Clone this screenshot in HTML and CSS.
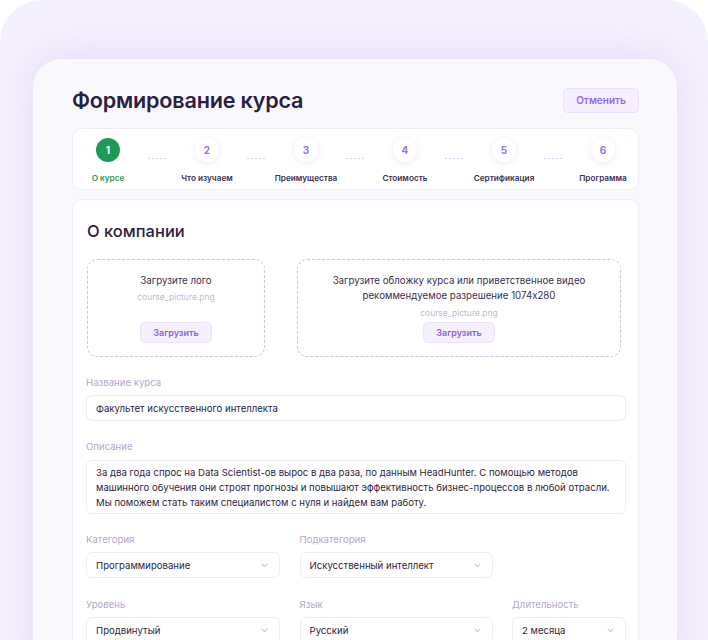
FILE: index.html
```html
<!DOCTYPE html>
<html lang="ru">
<head>
<meta charset="utf-8">
<title>Формирование курса</title>
<link rel="stylesheet" href="styles.css">
</head>
<body>
<div class="frame">
  <div class="panel">
    <div class="header">
      <h1 class="title">Формирование курса</h1>
      <button class="btn-cancel">Отменить</button>
    </div>

    <div class="stepper">
      <div class="step step-active"><span class="circle">1</span><span class="step-label">О курсе</span></div>
      <div class="connector"><span class="dash"></span></div>
      <div class="step"><span class="circle">2</span><span class="step-label">Что изучаем</span></div>
      <div class="connector"><span class="dash"></span></div>
      <div class="step"><span class="circle">3</span><span class="step-label">Преимущества</span></div>
      <div class="connector"><span class="dash"></span></div>
      <div class="step"><span class="circle">4</span><span class="step-label">Стоимость</span></div>
      <div class="connector"><span class="dash"></span></div>
      <div class="step"><span class="circle">5</span><span class="step-label">Сертификация</span></div>
      <div class="connector"><span class="dash"></span></div>
      <div class="step"><span class="circle">6</span><span class="step-label">Программа</span></div>
    </div>

    <div class="card">
      <h2 class="card-title">О компании</h2>

      <div class="uploads">
        <div class="upload upload-logo">
          <div class="upload-text">Загрузите лого</div>
          <div class="upload-file">course_picture.png</div>
          <button class="btn-upload">Загрузить</button>
        </div>
        <div class="upload upload-cover">
          <div class="upload-text">Загрузите обложку курса или приветственное видео<br>рекоммендуемое разрешение 1074x280</div>
          <div class="upload-file">course_picture.png</div>
          <button class="btn-upload">Загрузить</button>
        </div>
      </div>

      <div class="field">
        <div class="label">Название курса</div>
        <div class="input">Факультет искусственного интеллекта</div>
      </div>

      <div class="field">
        <div class="label label-area">Описание</div>
        <div class="input textarea">За два года спрос на Data Scientist-ов вырос в два раза, по данным HeadHunter. С помощью методов<br>машинного обучения они строят прогнозы и повышают эффективность бизнес-процессов в любой отрасли.<br>Мы поможем стать таким специалистом с нуля и найдем вам работу.</div>
      </div>

      <div class="grid">
        <div class="field">
          <div class="label">Категория</div>
          <div class="input select"><span>Программирование</span><svg class="chev" width="7" height="5" viewBox="0 0 7 5"><path d="M1 1.2 3.5 3.6 6 1.2" fill="none" stroke="#c9bfe0" stroke-width="1.1" stroke-linecap="round" stroke-linejoin="round"/></svg></div>
        </div>
        <div class="field">
          <div class="label">Подкатегория</div>
          <div class="input select"><span>Искусственный интеллект</span><svg class="chev" width="7" height="5" viewBox="0 0 7 5"><path d="M1 1.2 3.5 3.6 6 1.2" fill="none" stroke="#c9bfe0" stroke-width="1.1" stroke-linecap="round" stroke-linejoin="round"/></svg></div>
        </div>
        <div></div>

        <div class="field">
          <div class="label">Уровень</div>
          <div class="input select"><span>Продвинутый</span><svg class="chev" width="7" height="5" viewBox="0 0 7 5"><path d="M1 1.2 3.5 3.6 6 1.2" fill="none" stroke="#c9bfe0" stroke-width="1.1" stroke-linecap="round" stroke-linejoin="round"/></svg></div>
        </div>
        <div class="field">
          <div class="label">Язык</div>
          <div class="input select"><span>Русский</span><svg class="chev" width="7" height="5" viewBox="0 0 7 5"><path d="M1 1.2 3.5 3.6 6 1.2" fill="none" stroke="#c9bfe0" stroke-width="1.1" stroke-linecap="round" stroke-linejoin="round"/></svg></div>
        </div>
        <div class="field">
          <div class="label">Длительность</div>
          <div class="input select"><span>2 месяца</span><svg class="chev" width="7" height="5" viewBox="0 0 7 5"><path d="M1 1.2 3.5 3.6 6 1.2" fill="none" stroke="#c9bfe0" stroke-width="1.1" stroke-linecap="round" stroke-linejoin="round"/></svg></div>
        </div>
      </div>
    </div>
  </div>
</div>
</body>
</html>
```
FILE: styles.css
```css
* { box-sizing: border-box; }

html, body {
  margin: 0;
  padding: 0;
  background: #ffffff;
}

body {
  font-family: Inter, "Noto Sans", "DejaVu Sans", sans-serif;
  color: #2d2340;
}

.frame {
  width: 708px;
  height: 640px;
  overflow: hidden;
  background: #f5f0fd;
  border-radius: 42px 42px 0 0;
  padding: 59px 31px 0 33px;
}

.panel {
  background: #f9f8fc;
  border-radius: 28px 28px 0 0;
  padding: 29px 38px 0 39px;
  height: 620px;
  box-shadow: 0 -4px 40px rgba(190, 165, 235, 0.28);
}

.header {
  display: flex;
  justify-content: space-between;
  align-items: center;
  height: 24px;
  margin-bottom: 16px;
}

.title {
  margin: 0;
  font-size: 21.6px;
  line-height: 24px;
  font-weight: 600;
  color: #2b2040;
  letter-spacing: -0.2px;
}

.btn-cancel {
  width: 76px;
  height: 25px;
  border: 1px solid #ebdffc;
  background: #f6effe;
  border-radius: 5px;
  font-family: inherit;
  font-size: 10px;
  font-weight: 600;
  color: #9466ee;
  padding: 0;
}

.stepper {
  display: flex;
  align-items: flex-start;
  height: 62px;
  background: #ffffff;
  border: 1px solid #efebf8;
  border-radius: 10px;
  padding: 9px 11px 0 11px;
  margin-bottom: 9px;
}

.step {
  width: 48px;
  flex: none;
  display: flex;
  flex-direction: column;
  align-items: center;
}

.circle {
  width: 24px;
  height: 24px;
  border-radius: 50%;
  background: #ffffff;
  box-shadow: 0 1px 6px rgba(130, 100, 200, 0.16);
  display: flex;
  align-items: center;
  justify-content: center;
  font-size: 10px;
  font-weight: 700;
  color: #9c6ef2;
}

.step-active .circle {
  background: #1f9a56;
  color: #ffffff;
  box-shadow: none;
}

.step-label {
  margin-top: 10px;
  white-space: nowrap;
  font-size: 8.2px;
  line-height: 12px;
  font-weight: 600;
  color: #3a2f4f;
}

.step-active .step-label {
  color: #2a9a5a;
}

.connector {
  flex: 1;
  display: flex;
  justify-content: center;
  padding-top: 20px;
}

.dash {
  width: 20px;
  height: 1px;
  background: repeating-linear-gradient(90deg, #d6cdea 0 2px, transparent 2px 4px);
}

.card {
  background: #ffffff;
  border: 1px solid #efebf8;
  border-radius: 10px;
  padding: 20px 12px 0 13px;
  height: 460px;
}

.card-title {
  margin: 0 0 17px 1px;
  font-size: 16.5px;
  line-height: 22px;
  font-weight: 500;
  color: #2b2040;
}

.uploads {
  display: flex;
  gap: 32px;
  margin-left: 1px;
  margin-bottom: 19px;
}

.upload {
  height: 98px;
  border: 1px dashed #cdbfee;
  border-radius: 10px;
  display: flex;
  flex-direction: column;
  align-items: center;
  text-align: center;
  padding: 13px 10px 13px;
}

.upload-logo { width: 178px; }
.upload-cover { width: 324px; }

.upload-text {
  font-size: 9.7px;
  line-height: 15px;
  color: #3a3050;
}

.upload-file {
  margin-top: 2px;
  font-size: 8.5px;
  line-height: 14px;
  color: #c4b8db;
}

.upload-cover .upload-file { margin-top: 3px; }

.btn-upload {
  margin-top: auto;
  width: 72px;
  height: 21px;
  border: 1px solid #ece3fb;
  background: #f6f0fe;
  border-radius: 5px;
  font-family: inherit;
  font-size: 9px;
  font-weight: 600;
  color: #8d5fe6;
  padding: 0;
}

.field {
  margin-bottom: 19px;
}

.grid .field {
  margin-bottom: 20px;
}

.label {
  font-size: 9.6px;
  line-height: 14px;
  color: #b3a7cd;
  margin-bottom: 5px;
}

.label-area {
  margin-bottom: 6px;
}

.input {
  border: 1px solid #efebf6;
  border-radius: 6px;
  background: #ffffff;
  height: 26px;
  padding: 0 9px;
  display: flex;
  align-items: center;
  font-size: 9.6px;
  color: #2d2540;
}

.textarea {
  display: block;
  height: 54px;
  padding: 4px 9px;
  font-size: 9.6px;
  line-height: 15px;
  white-space: nowrap;
}

.grid {
  display: grid;
  grid-template-columns: 194px 193px 114px;
  justify-content: space-between;
}

.select {
  justify-content: space-between;
}

.chev {
  flex: none;
  margin-right: 2px;
}
```
